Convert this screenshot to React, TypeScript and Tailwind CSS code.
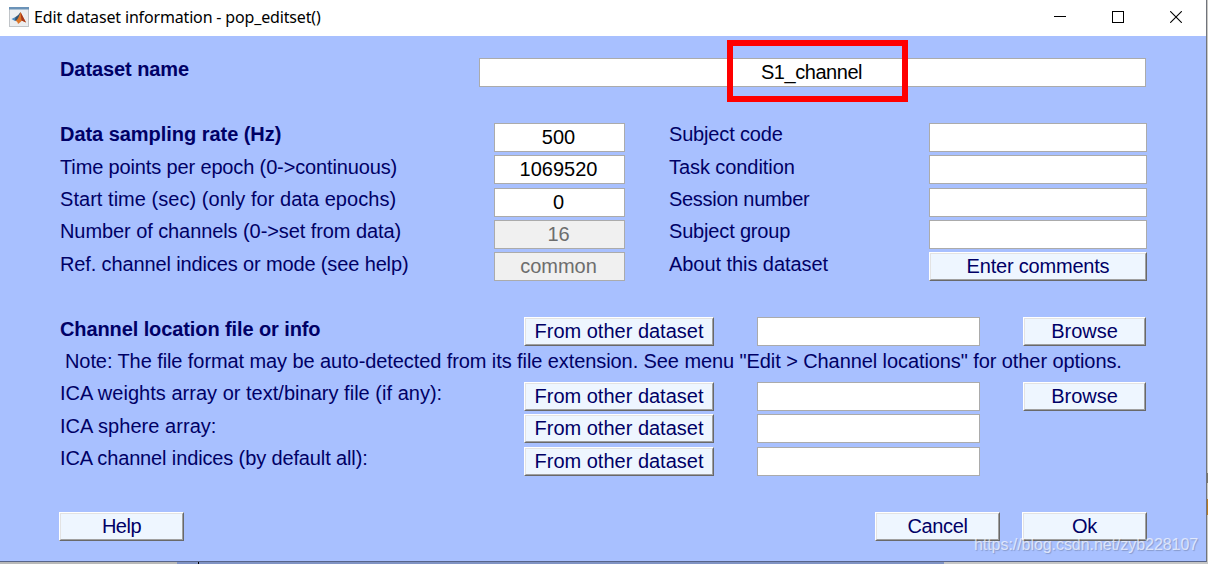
import type { ReactNode } from 'react';

const infoRows = [
  { label: 'Data sampling rate (Hz)', bold: true, value: '500', right: 'Subject code', row: 'h-8', tracking: 'tracking-[-0.04px]', rightTracking: 'tracking-[-0.17px]' },
  { label: 'Time points per epoch (0->continuous)', value: '1069520', right: 'Task condition', row: 'h-[33px]', pad: true, tracking: 'tracking-[-0.14px]', rightTracking: 'tracking-[-0.07px]' },
  { label: 'Start time (sec) (only for data epochs)', value: '0', right: 'Session number', row: 'h-8', tracking: 'tracking-[0.04px]', rightTracking: 'tracking-[-0.3px]' },
  { label: 'Number of channels (0->set from data)', value: '16', disabled: true, right: 'Subject group', row: 'h-8', tracking: 'tracking-[-0.08px]', rightTracking: 'tracking-[-0.17px]' },
  { label: 'Ref. channel indices or mode (see help)', value: 'common', disabled: true, right: 'About this dataset', row: 'h-[65px]', pad: true, comments: true, tracking: 'tracking-[-0.13px]', rightTracking: 'tracking-[-0.06px]' },
];

const fileRows = [
  { label: 'ICA weights array or text/binary file (if any):', row: 'h-8', browse: true, tracking: 'tracking-[0.02px]' },
  { label: 'ICA sphere array:', row: 'h-[33px]', pad: true, tracking: 'tracking-[0.05px]' },
  { label: 'ICA channel indices (by default all):', row: 'h-[65px]', tracking: 'tracking-[-0.13px]' },
];

function Label({ children, bold, pad, className = '' }: { children: ReactNode; bold?: boolean; pad?: boolean; className?: string }) {
  return (
    <div className={`shrink-0 whitespace-pre leading-[23px] text-[#000066] ${bold ? 'font-bold' : ''} ${pad ? 'pt-px' : ''} ${className}`}>
      {children}
    </div>
  );
}

function Field({ children, disabled, className = '' }: { children?: ReactNode; disabled?: boolean; className?: string }) {
  return (
    <div className={`h-[29px] shrink-0 border border-[#ababab] pr-0.5 text-center leading-[27px] ${disabled ? 'bg-[#f0f0f0] text-[#6d6d6d]' : 'bg-white text-black'} ${className}`}>
      {children}
    </div>
  );
}

function Button({ children, className = '' }: { children: ReactNode; className?: string }) {
  return (
    <button className={`block h-[29px] shrink-0 border border-t-white border-r-[#696969] border-b-[#696969] border-l-white bg-[#696969] ${className}`}>
      <span className="block h-[27px] border border-t-[#e3e3e3] border-r-[#a0a0a0] border-b-[#a0a0a0] border-l-[#e3e3e3] bg-[#eef6ff] text-center leading-[25px] text-[#000066]">
        {children}
      </span>
    </button>
  );
}

function MatlabIcon() {
  return (
    <svg width="20" height="20" viewBox="0 0 20 20" className="shrink-0">
      <rect x="0.5" y="0.5" width="19" height="19" fill="#eceef0" stroke="#c0c4c8" />
      <rect width="20" height="2.5" fill="#6b93b8" />
      <path d="M2.5 12 L6.5 10 L8.5 11.5 L6 14 Z" fill="#4b8ac0" />
      <path d="M6.5 10 Q9.5 8.5 11.5 5 L10 12 L8 14 L6 13.5 Z" fill="#34536f" />
      <path d="M11.5 5 Q9.5 12 6.5 14 Q8.5 14 9 17 Q11.5 15 13 13.5 L17 15.5 Q14 10 11.5 5 Z" fill="#de7628" />
      <path d="M11.5 5 L12.5 13.5 L17 15.5 Q14 10 11.5 5 Z" fill="#a8381c" />
    </svg>
  );
}

function TitleBar() {
  return (
    <header className="flex h-9 items-start bg-white pr-6 pl-[9px]">
      <div className="pt-[7px]">
        <MatlabIcon />
      </div>
      <h1 className="ml-[5px] pt-[6px] font-['Noto_Sans',sans-serif] text-[16px] leading-[23px] tracking-[-0.16px] whitespace-nowrap text-black">
        Edit dataset information - pop_editset()
      </h1>
      <div className="ml-auto flex gap-[46px] pt-[11px]">
        <svg width="12" height="12" viewBox="0 0 12 12" stroke="#000" fill="none" shapeRendering="crispEdges">
          <path d="M0 5.5 H12" />
        </svg>
        <svg width="12" height="12" viewBox="0 0 12 12" stroke="#000" fill="none" shapeRendering="crispEdges">
          <rect x="0.5" y="0.5" width="11" height="11" />
        </svg>
        <svg width="12" height="12" viewBox="0 0 12 12" stroke="#000" fill="none">
          <path d="M0.2 0.2 L11.8 11.8 M11.8 0.2 L0.2 11.8" strokeWidth="1.1" />
        </svg>
      </div>
    </header>
  );
}

export default function App() {
  return (
    <div className="relative h-[564px] w-[1208px] overflow-hidden font-['Liberation_Sans',Arial,sans-serif] text-[20px]">
      <div className="flex h-[562px]">
        <div className="flex w-[1207px] flex-col border-r border-b border-r-[#70747c] border-b-[#58658a] bg-[#a8c0ff]">
          <TitleBar />

          <main className="pt-[22px]">
            <div className="flex h-[65px]">
              <Label bold className="ml-[60px] w-[419px] tracking-[-0.08px]">Dataset name</Label>
              <Field className="w-[667px] tracking-[-0.45px]">S1_channel</Field>
            </div>

            {infoRows.map((r) => (
              <div key={r.label} className={`flex ${r.row}`}>
                <Label bold={r.bold} pad={r.pad} className={`ml-[60px] w-[434px] ${r.tracking}`}>{r.label}</Label>
                <Field disabled={r.disabled} className="w-[131px]">{r.value}</Field>
                <Label pad={r.pad} className={`ml-11 w-[260px] ${r.rightTracking}`}>{r.right}</Label>
                {r.comments ? <Button className="w-[218px] tracking-[-0.2px]">Enter comments</Button> : <Field className="w-[218px]" />}
              </div>
            ))}

            <div className="flex h-[33px]">
              <Label bold pad className="ml-[60px] w-[464px] tracking-[-0.1px]">Channel location file or info</Label>
              <Button className="w-[190px]">From other dataset</Button>
              <Field className="ml-[43px] w-[223px]" />
              <Button className="ml-[43px] w-[123px]">Browse</Button>
            </div>

            <div className="flex h-8">
              <Label className="ml-[65px] tracking-[-0.085px]">
                {'Note: The file format may be auto-detected from its file extension. See menu "Edit > Channel locations" for other options.'}
              </Label>
            </div>

            {fileRows.map((r) => (
              <div key={r.label} className={`flex ${r.row}`}>
                <Label pad={r.pad} className={`ml-[60px] w-[464px] ${r.tracking}`}>{r.label}</Label>
                <Button className="w-[190px]">From other dataset</Button>
                <Field className="ml-[43px] w-[223px]" />
                {r.browse && <Button className="ml-[43px] w-[123px]">Browse</Button>}
              </div>
            ))}

            <div className="flex">
              <Button className="ml-[59px] w-[125px] tracking-[-0.5px]">Help</Button>
              <Button className="ml-[691px] w-[125px] tracking-[-0.4px]">Cancel</Button>
              <Button className="ml-[22px] w-[125px] tracking-[-0.4px]">Ok</Button>
            </div>
          </main>
        </div>

        {/* sliver of the windows behind */}
        <div className="flex w-px flex-col bg-[#c9c8c4]">
          <div className="mt-[473px] h-[10px] bg-[#77756f]" />
          <div className="mt-4 h-4 bg-[#b87a24]" />
        </div>
      </div>
      <div className="flex h-[2px]">
        <div className="w-[177px] bg-[#b9b9b9]" />
        <div className="w-[21px] bg-[#8093c4]" />
        <div className="w-px bg-black" />
        <div className="w-[745px] bg-[#8093c4]" />
        <div className="flex-1 bg-[#c6c6c6]" />
      </div>

      <div className="absolute top-[40px] left-[727px] h-[62px] w-[181px] border-[6px] border-[#ff0000]" />
      <div className="absolute top-[535px] left-[974px] text-[16px] leading-5 tracking-[-0.06px] whitespace-nowrap text-white/65 [text-shadow:1px_1px_1px_rgba(0,0,0,0.2)]">
        https://blog.csdn.net/zyb228107
      </div>
    </div>
  );
}
